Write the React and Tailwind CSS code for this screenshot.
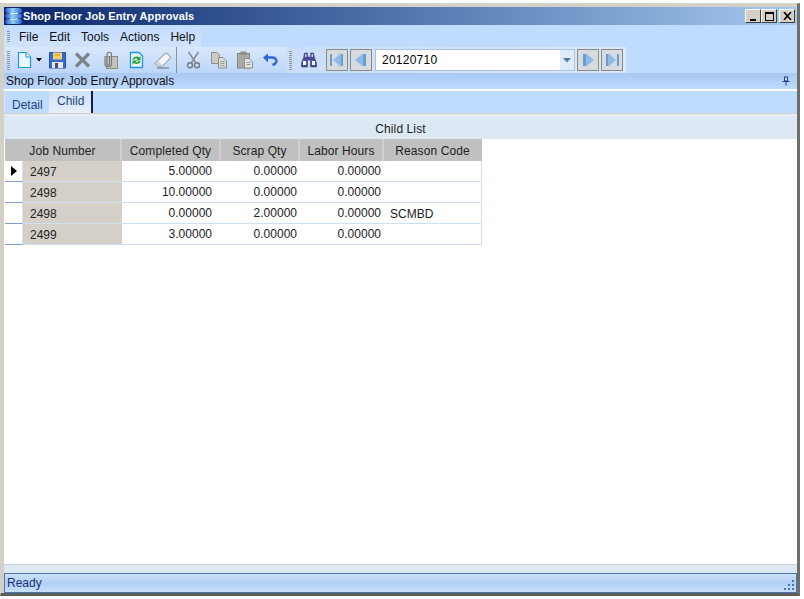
const font = { fontFamily: '"Liberation Sans", Arial, sans-serif' };

function Grip({ h = 20 }) {
  return (
    <div className="flex flex-col gap-px w-[3px] shrink-0" aria-hidden="true">
      {Array.from({ length: h }).map((_, i) => (
        <div key={i} className="h-px bg-[#8f949c]" />
      ))}
    </div>
  );
}

const Ic = ({ children, w = 18, cls = "" }) => (
  <svg width={w} height="18" viewBox={`0 0 ${w} 18`} className={`shrink-0 ${cls}`}>
    {children}
  </svg>
);

const NewDoc = () => (
  <Ic w={15}>
    <path d="M1.5 1.5H9L13.5 6V16.5H1.5Z" fill="#eaf6ff" stroke="#1e96e6" strokeWidth="1.2" />
    <path d="M9 1.5V6H13.5" fill="#ffffff" stroke="#1e96e6" />
  </Ic>
);
const Save = () => (
  <Ic w={17}>
    <path d="M.5 1.5H16.5V17H.5Z" fill="#3a6ad0" stroke="#2450b0" />
    <rect x="4" y="1.5" width="9" height="7" fill="#f6cf66" />
    <rect x="6" y="3.5" width="5" height="1" fill="#c99a30" />
    <rect x="3" y="11" width="11" height="6" fill="#e8e8ec" />
    <rect x="6" y="12" width="3" height="5" fill="#3a4f80" />
  </Ic>
);
const XIcon = () => (
  <Ic w={17}>
    <path d="M2 2.5L15 15.5M15 2.5L2 15.5" stroke="#7e8388" strokeWidth="3.2" />
  </Ic>
);
const Attach = () => (
  <Ic w={16}>
    <rect x="4.5" y="5.5" width="11" height="12" fill="#c4c4bf" stroke="#8b8b88" />
    <path d="M3 5V13C3 16.5 9.5 16.5 9.5 13V3.5C9.5 .5 5 .5 5 3.5V12.5C5 14.3 7.5 14.3 7.5 12.5V5" fill="#d8d8d4" fillOpacity=".4" stroke="#77797a" strokeWidth="1.2" />
  </Ic>
);
const Refresh = () => (
  <Ic w={15}>
    <path d="M1.5 1.5H10L13.5 5V16.5H1.5Z" fill="#e9f6ff" stroke="#1e96e6" strokeWidth="1.3" />
    <path d="M3.5 8.5C4 5.5 8 4.5 10 6.5L11.5 5V9.5H7L8.5 8C7.5 7 6 7 5.5 8.5Z" fill="#27a127" />
    <path d="M11.5 10C11 13 7 14 5 12L3.5 13.5V9.5H8L6.5 10.7C7.5 11.7 9 11.7 9.5 10Z" fill="#27a127" />
  </Ic>
);
const Eraser = () => (
  <Ic w={17}>
    <path d="M1 12.5L10.5 3C11.5 2 12.7 2 13.7 3L15.5 4.8C16.5 5.8 16.5 7 15.5 8L8 15.5H4Z" fill="#f6f7f8" stroke="#788496" />
    <path d="M1.2 12.5L4.2 15.5H8L9 14.5L5 10.5Z" fill="#cdd1d8" />
    <path d="M3 17H15" stroke="#5a6a8a" />
  </Ic>
);
const Cut = () => (
  <Ic w={15}>
    <path d="M2.5 1L9.5 11.5M12.5 1L5.5 11.5" stroke="#85898c" strokeWidth="1.4" />
    <circle cx="4" cy="14.3" r="2.5" fill="none" stroke="#75797c" strokeWidth="1.4" />
    <circle cx="11" cy="14.3" r="2.5" fill="none" stroke="#75797c" strokeWidth="1.4" />
  </Ic>
);
const Copy = () => (
  <Ic w={16}>
    <path d="M.5 1.5H6L8.5 4V12.5H.5Z" fill="#c9c9c6" stroke="#8d8d8a" />
    <path d="M7.5 6.5H12L15.5 10V17H7.5Z" fill="#dadad8" stroke="#8d8d8a" />
    <path d="M9.5 10.5H13.5M9.5 12.5H13.5M9.5 14.5H13.5" stroke="#9a9a98" />
  </Ic>
);
const Paste = () => (
  <Ic w={16}>
    <rect x=".5" y="2.5" width="12" height="14.5" fill="#a9a9a6" stroke="#858583" />
    <rect x="3.5" y=".5" width="6" height="3.5" fill="#8c8c8a" />
    <path d="M7.5 7.5H12L15.5 11V17H7.5Z" fill="#e2e2e0" stroke="#8d8d8a" />
    <path d="M9.5 11.5H13.5M9.5 13.5H13.5" stroke="#9a9a98" />
  </Ic>
);
const Undo = () => (
  <Ic w={15}>
    <path d="M4 6.5H9.5C13 6.5 14 9.5 13 11.5C12.4 12.8 11 13.6 9.5 14" fill="none" stroke="#2f66d8" strokeWidth="2.4" />
    <path d="M0 6.5L5 2.5V11.5Z" fill="#2f66d8" />
  </Ic>
);
const Binoculars = () => (
  <Ic w={16}>
    <path d="M3.5 2H6.5V6H9.5V2H12.5L13.5 7L15.5 12V16H9.5V9H6.5V16H.5V12L2.5 7Z" fill="#4b4a96" stroke="#2e2d6e" strokeWidth=".5" />
    <rect x="2" y="10" width="3" height="4" fill="#ffffff" />
    <rect x="11" y="10" width="3" height="4" fill="#ffffff" />
    <rect x="4" y="3" width="1.5" height="3" fill="#c9c9f0" />
    <rect x="10.5" y="3" width="1.5" height="3" fill="#c9c9f0" />
  </Ic>
);

function NavBtn({ kind }) {
  const c1 = "#8fb9e6";
  const c2 = "#6e9cc8";
  return (
    <div className="w-[22px] h-[22px] border border-[#8a8a86] bg-[#d6dbe0] flex items-center justify-center shrink-0">
      <svg width="14" height="14" viewBox="0 0 14 14">
        {kind === "first" && (
          <>
            <rect x="0" y="1" width="2" height="12" fill={c2} />
            <path d="M11 0V14L3 7Z" fill={c1} />
            <rect x="11" y="1" width="2" height="12" fill="#6e9cc8" />
          </>
        )}
        {kind === "prev" && (
          <>
            <path d="M9 .5V13.5L1 7Z" fill={c1} />
            <rect x="9" y="1" width="3" height="12" fill={c2} />
          </>
        )}
        {kind === "next" && (
          <>
            <rect x="2" y="1" width="3" height="12" fill={c2} />
            <path d="M5 .5V13.5L13 7Z" fill={c1} />
          </>
        )}
        {kind === "last" && (
          <>
            <rect x="1" y="1" width="2" height="12" fill={c2} />
            <path d="M3 0V14L11 7Z" fill={c1} />
            <rect x="12" y="1" width="2" height="12" fill={c2} />
          </>
        )}
      </svg>
    </div>
  );
}

const winBtn = "w-[16px] h-[14px] bg-[#d4d0c8] border-t border-l border-t-white border-l-white border-r border-b border-r-[#404040] border-b-[#404040] flex items-center justify-center shrink-0";

const rows = [
  ["2497", "5.00000", "0.00000", "0.00000", ""],
  ["2498", "10.00000", "0.00000", "0.00000", ""],
  ["2498", "0.00000", "2.00000", "0.00000", "SCMBD"],
  ["2499", "3.00000", "0.00000", "0.00000", ""],
];

const headers = [
  ["Job Number", "w-[117px]"],
  ["Completed Qty", "w-[99px]"],
  ["Scrap Qty", "w-[79px]"],
  ["Labor Hours", "w-[84px]"],
  ["Reason Code", "w-[97px]"],
];

export default function App() {
  return (
    <div className="w-[804px] h-[599px] bg-white pt-[3px] text-[12px] leading-none text-black" style={font}>
      <div className="w-[800px] h-[593px] bg-[#d4d0c8] border-t border-t-[#d8d5ce] border-l border-l-[#d4d0c8] border-r-[3px] border-r-[#6e6e6a] border-b-[3px] border-b-[#5e5e5a] flex flex-col pl-[3px] pt-[3px]">
        {/* Title bar */}
        <div className="h-[18px] shrink-0 flex items-center bg-gradient-to-r from-[#0a246a] to-[#a6caf0] pr-[2px]">
          <svg width="19" height="18" viewBox="0 0 19 18" className="shrink-0">
            <defs>
              <linearGradient id="barrel" x1="0" y1="0" x2="1" y2="0">
                <stop offset="0" stopColor="#1f55c8" />
                <stop offset=".45" stopColor="#8fd4fa" />
                <stop offset="1" stopColor="#2a62cc" />
              </linearGradient>
            </defs>
            <rect x="1" y="1" width="17" height="5" rx="2.5" fill="url(#barrel)" />
            <rect x="1" y="6.5" width="17" height="5" rx="2" fill="url(#barrel)" />
            <rect x="1" y="12" width="17" height="5" rx="2.5" fill="url(#barrel)" />
            <rect x="6" y="6" width="8" height="1" fill="#e8f8ff" />
            <rect x="6" y="11.5" width="8" height="1" fill="#e8f8ff" />
          </svg>
          <span className="text-white font-bold text-[11px] tracking-[0.1px]">Shop Floor Job Entry Approvals</span>
          <div className="ml-auto flex items-center">
            <div className={winBtn}>
              <div className="w-[6px] h-[2px] bg-black mt-[7px] -ml-[1px]" />
            </div>
            <div className={winBtn}>
              <div className="w-[9px] h-[9px] border border-black border-t-2" />
            </div>
            <div className={`${winBtn} ml-[2px]`}>
              <svg width="9" height="8" viewBox="0 0 9 8">
                <path d="M1 0L8 8M8 0L1 8" stroke="#000" strokeWidth="1.6" />
              </svg>
            </div>
          </div>
        </div>

        {/* Menu + toolbars */}
        <div className="bg-[#bfdbff] shrink-0">
          <div className="h-[21px] mt-px flex">
            <div className="w-[197px] bg-gradient-to-b from-[#c3ddff] to-[#d0e3fb] flex items-center pl-[3px]">
              <Grip h={6} />
              <div className="flex gap-[11px] ml-[9px] text-[12px] text-[#111]">
                <span>File</span>
                <span>Edit</span>
                <span>Tools</span>
                <span>Actions</span>
                <span>Help</span>
              </div>
            </div>
          </div>
          <div className="h-[26px] flex items-stretch">
            <div className="w-[282px] bg-gradient-to-b from-[#d9e8fb] to-[#bdd6f8] flex items-center pl-[3px]">
              <Grip h={10} />
              <div className="flex items-center ml-[7px]">
                <NewDoc />
                <svg width="6" height="4" viewBox="0 0 6 4" className="ml-[4px] mr-[7px]">
                  <path d="M0 0H6L3 3.5Z" fill="#000" />
                </svg>
                <Save />
                <div className="w-[8px]" />
                <XIcon />
                <div className="w-[11px]" />
                <Attach />
                <div className="w-[11px]" />
                <Refresh />
                <div className="w-[10px]" />
                <Eraser />
                <div className="w-[5px]" />
                <div className="w-px h-[26px] bg-[#8b9199]" />
                <div className="w-[9px]" />
                <Cut />
                <div className="w-[10px]" />
                <Copy />
                <div className="w-[10px]" />
                <Paste />
                <div className="w-[10px]" />
                <Undo />
              </div>
            </div>
            <div className="w-[340px] bg-gradient-to-r from-[#c9def9] to-[#dbe8f8] flex items-center pl-[3px]">
              <Grip h={10} />
              <div className="ml-[9px]">
                <Binoculars />
              </div>
              <div className="ml-[9px] flex items-center gap-[2px]">
                <NavBtn kind="first" />
                <NavBtn kind="prev" />
              </div>
              <div className="ml-[3px] w-[200px] h-[22px] bg-white border border-[#a9c1e2] flex items-center shrink-0">
                <span className="pl-[6px] text-[12px] tracking-[0.25px]">20120710</span>
                <div className="ml-auto w-[14px] h-full bg-[#e2ecf9] flex items-center justify-center">
                  <svg width="8" height="5" viewBox="0 0 8 5">
                    <path d="M0 0H8L4 4.5Z" fill="#5478a8" />
                  </svg>
                </div>
              </div>
              <div className="ml-[2px] flex items-center gap-[2px]">
                <NavBtn kind="next" />
                <NavBtn kind="last" />
              </div>
            </div>
          </div>
        </div>

        {/* Panel caption */}
        <div className="h-[16px] shrink-0 bg-gradient-to-b from-[#a8c8f3] to-[#bfdaff] flex items-center pl-[2px] pr-[7px] text-[12px] text-[#111]">
          <span className="tracking-[-0.02px]">Shop Floor Job Entry Approvals</span>
          <svg width="8" height="10" viewBox="0 0 8 10" className="ml-auto">
            <path d="M2 .5H6V5H7.5V6H4.5V9.5H3.5V6H.5V5H2Z" fill="#1c3f98" />
            <rect x="3" y="1.5" width="2" height="3" fill="#bfdaff" />
          </svg>
        </div>
        <div className="h-[2px] shrink-0 bg-white" />

        {/* Tabs */}
        <div className="h-[22px] shrink-0 bg-[#bfdbff] flex items-end">
          <div className="w-[45px] h-[19px] flex items-center pl-[7px] pt-[2px] text-[#24447e] text-[12px] border-l border-l-[#d9e8fb]">Detail</div>
          <div className="w-[44px] h-[22px] bg-gradient-to-b from-[#cfe2fb] to-[#e6eef9] border-r-2 border-r-[#10233f] flex items-center pl-[8px] text-[#24447e] text-[12px] pb-[2px]">Child</div>
        </div>

        {/* Body */}
        <div className="flex-1 min-h-0 flex flex-col bg-white">
          <div className="h-[4px] shrink-0 bg-[#e6ecf4] border-t border-t-[#cfcfcb]" />
          <div className="h-[22px] shrink-0 bg-[#dde8f5] flex items-center">
            <span className="w-full text-center text-[12px] tracking-[0.1px] text-[#222] pt-[1px]">Child List</span>
          </div>
          <div className="flex-1 min-h-0 pl-[1px]">
            <div className="w-[477px]">
              <div className="h-[22px] flex bg-[#c0c0c0]">
                {headers.map(([label, w]) => (
                  <div key={label} className={`${w} border-r-2 border-r-[#cfcfcf] last:border-r-0 flex items-center justify-center pt-[2px] text-[12px] tracking-[0.1px] text-[#222]`}>
                    {label}
                  </div>
                ))}
              </div>
              {rows.map((r, i) => (
                <div key={i} className="h-[21px] flex border-b border-b-[#cfe0f3] border-r border-r-[#cfe0f3]">
                  <div className="w-[18px] border-r border-r-[#cfe0f3] border-b border-b-[#7f9cc4] -mb-px flex items-center justify-center">
                    {i === 0 && (
                      <svg width="6" height="10" viewBox="0 0 6 10">
                        <path d="M0 0L6 5L0 10Z" fill="#000" />
                      </svg>
                    )}
                  </div>
                  <div className="w-[99px] bg-[#d4d0c8] flex items-center pl-[7px] pt-[1px] text-[12px] text-[#222]">{r[0]}</div>
                  <div className="w-[99px] flex items-center justify-end pr-[9px] text-[12px] text-[#222]">{r[1]}</div>
                  <div className="w-[79px] flex items-center justify-end pr-[3px] text-[12px] text-[#222]">{r[2]}</div>
                  <div className="w-[84px] flex items-center justify-end pr-[3px] text-[12px] text-[#222]">{r[3]}</div>
                  <div className="flex-1 flex items-center pl-[6px] pt-[1px] text-[12px] text-[#222]">{r[4]}</div>
                </div>
              ))}
            </div>
          </div>
          <div className="h-[9px] shrink-0 bg-[#dde8f5] border-t border-t-[#cfcfcf]" />
        </div>

        {/* Status bar */}
        <div className="h-[20px] shrink-0 border border-[#4a76ad] bg-gradient-to-b from-[#cbe0fb] via-[#b3d1f6] to-[#c9dffb] flex items-center pl-[2px] text-[12px] text-[#1c2f78]">
          <span>Ready</span>
          <svg width="11" height="11" viewBox="0 0 11 11" className="ml-auto mr-[1px] mt-[4px]">
            <g fill="#4a76ad">
              <rect x="8" y="0" width="2" height="2" />
              <rect x="4" y="4" width="2" height="2" />
              <rect x="8" y="4" width="2" height="2" />
              <rect x="0" y="8" width="2" height="2" />
              <rect x="4" y="8" width="2" height="2" />
              <rect x="8" y="8" width="2" height="2" />
            </g>
          </svg>
        </div>
      </div>
    </div>
  );
}
